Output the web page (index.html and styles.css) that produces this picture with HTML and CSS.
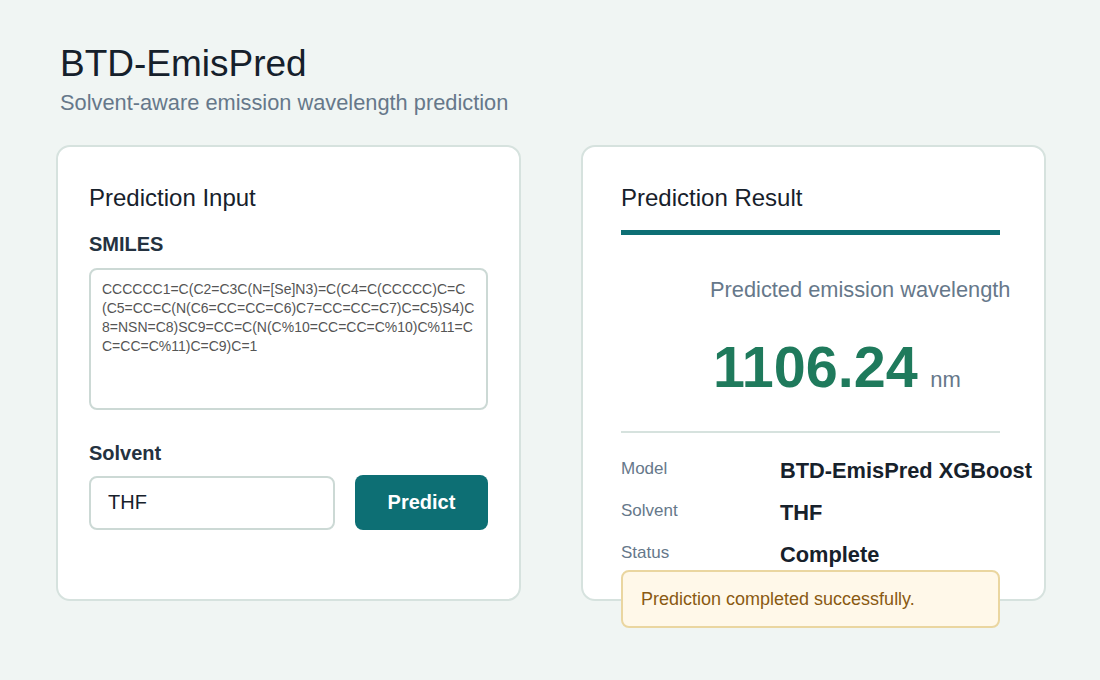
FILE: index.html
```html
<!DOCTYPE html>
<html lang="en">
<head>
  <meta charset="UTF-8" />
  <title>BTD-EmisPred</title>
  <meta name="viewport" content="width=device-width, initial-scale=1" />
  <link rel="stylesheet" href="styles.css">
</head>
<body>
  <header class="page-head">
    <h1>BTD-EmisPred</h1>
    <p class="subtitle">Solvent-aware emission wavelength prediction</p>
  </header>

  <main class="cards">
    <!-- input card -->
    <section class="card card-input">
      <h2>Prediction Input</h2>
      <label class="field-label" for="smiles">SMILES</label>
      <textarea id="smiles" class="smiles">CCCCCC1=C(C2=C3C(N=[Se]N3)=C(C4=C(CCCCC)C=C(C5=CC=C(N(C6=CC=CC=C6)C7=CC=CC=C7)C=C5)S4)C8=NSN=C8)SC9=CC=C(N(C%10=CC=CC=C%10)C%11=CC=CC=C%11)C=C9)C=1</textarea>
      <label class="field-label" for="solvent">Solvent</label>
      <div class="solvent-row">
        <input id="solvent" class="solvent" type="text" value="THF" />
        <button class="predict">Predict</button>
      </div>
    </section>

    <!-- result card -->
    <section class="card card-result">
      <h2 class="result-title">Prediction Result</h2>
      <div class="result-main">
        <p class="result-label">Predicted emission wavelength</p>
        <p class="result-value"><span class="num">1106.24</span> <span class="unit">nm</span></p>
      </div>
      <dl class="meta">
        <dt>Model</dt><dd>BTD-EmisPred XGBoost</dd>
        <dt>Solvent</dt><dd>THF</dd>
        <dt>Status</dt><dd>Complete</dd>
      </dl>
      <div class="notice">Prediction completed successfully.</div>
    </section>
  </main>
</body>
</html>
```

FILE: styles.css
```css
html {
  background-color: #f0f5f3;
}
body {
  box-sizing: border-box;
  min-height: 680px;
  margin: 0;
  padding: 40px 55px 60px 56px;
  background-color: #f0f5f3;
  font-family: "Liberation Sans", Arial, sans-serif;
  color: #17212b;
}
.page-head {
  padding-left: 4px;
}
h1 {
  margin: 0;
  font-size: 37px;
  font-weight: normal;
  line-height: 48px;
  color: #15202b;
}
.subtitle {
  margin: 1px 0 0;
  font-size: 21.8px;
  line-height: 28px;
  color: #66788a;
}
.cards {
  display: grid;
  grid-template-columns: 465px 465px;
  gap: 60px;
  margin-top: 28px;
}
.card {
  box-sizing: border-box;
  height: 456px;
  background: #fff;
  border: 2px solid #d6e2de;
  border-radius: 14px;
}
.card h2 {
  margin: 0;
  font-size: 24px;
  font-weight: normal;
  line-height: 28px;
  color: #17212b;
}
.card-input {
  padding: 37px 31px 0;
}
.field-label {
  display: block;
  margin-top: 20px;
  font-size: 20px;
  font-weight: bold;
  line-height: 24px;
  color: #243240;
}
.smiles {
  display: block;
  box-sizing: border-box;
  width: 100%;
  height: 142px;
  margin-top: 12px;
  padding: 10px 6px 10px 11px;
  border: 2px solid #ccd9d5;
  border-radius: 8px;
  resize: none;
  font-family: "Liberation Sans", Arial, sans-serif;
  font-size: 14px;
  line-height: 19px;
  color: #555;
  word-break: break-all;
  overflow: hidden;
}
.smiles + .field-label {
  margin-top: 31px;
}
.solvent-row {
  display: flex;
  gap: 20px;
  align-items: center;
  margin-top: 10px;
}
.solvent {
  box-sizing: border-box;
  width: 246px;
  height: 54px;
  padding: 0 17px;
  border: 2px solid #ccd9d5;
  border-radius: 8px;
  font-family: "Liberation Sans", Arial, sans-serif;
  font-size: 20px;
  color: #17212b;
}
.predict {
  width: 135px;
  height: 55px;
  border: none;
  border-radius: 8px;
  background-color: #0d6f74;
  color: #fff;
  font-family: "Liberation Sans", Arial, sans-serif;
  font-size: 20px;
  font-weight: bold;
  cursor: pointer;
}
.card-result {
  padding: 37px 44px 0 38px;
}
.result-title {
  padding-bottom: 18px;
  border-bottom: 5px solid #0d6f74;
}
.result-main {
  padding-left: 89px;
  margin-top: 41px;
  padding-bottom: 17px;
  border-bottom: 2px solid #d6e2de;
}
.result-label {
  margin: 0;
  font-size: 21.8px;
  line-height: 28px;
  color: #66788a;
  white-space: nowrap;
}
.result-value {
  margin: 31px 0 0 3px;
  line-height: 64px;
  white-space: nowrap;
}
.num {
  font-size: 57.5px;
  font-weight: bold;
  color: #1f7a5c;
}
.unit {
  margin-left: 8px;
  font-size: 22px;
  color: #66788a;
}
.meta {
  display: grid;
  grid-template-columns: 159px 1fr;
  row-gap: 18px;
  margin: 24px 0 0;
  white-space: nowrap;
}
.meta dt {
  font-size: 17px;
  line-height: 24px;
  color: #66788a;
}
.meta dd {
  margin: 0;
  font-size: 21.8px;
  font-weight: bold;
  line-height: 24px;
  color: #17212b;
  position: relative;
  top: 2px;
}
.notice {
  box-sizing: border-box;
  height: 58px;
  margin-top: 5px;
  padding: 17px 18px 0;
  background: #fff8e9;
  border: 2px solid #ead6a0;
  border-radius: 8px;
  font-size: 18px;
  line-height: 20px;
  color: #8a5a12;
}
```
